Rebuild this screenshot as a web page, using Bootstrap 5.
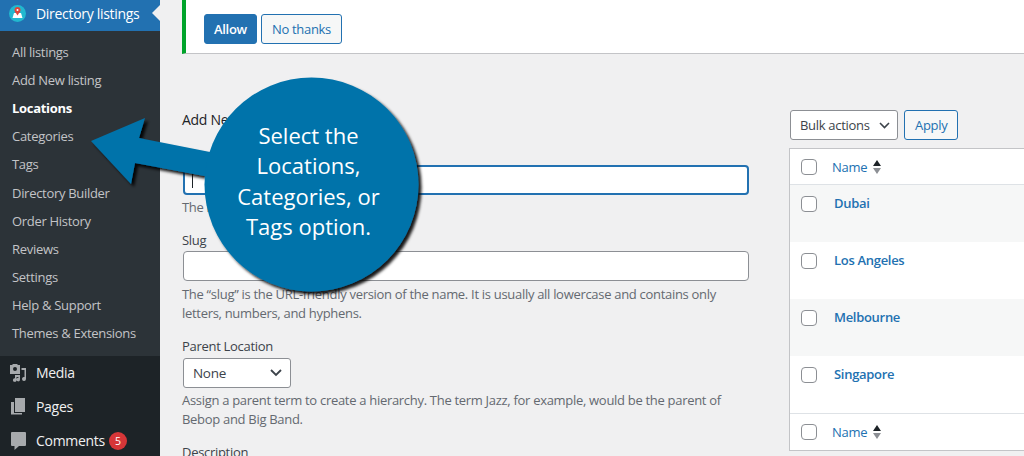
<!DOCTYPE html>
<html lang="en">
<head>
<meta charset="UTF-8">
<title>Locations – Directory listings</title>
<link href="https://cdn.jsdelivr.net/npm/bootstrap@5.3.3/dist/css/bootstrap.min.css" rel="stylesheet">
<style>
html,body{height:456px;overflow:hidden}
body{background:#f0f0f1;color:#3c434a;font-family:"Open Sans","Noto Sans",sans-serif;font-size:13px;line-height:19px;letter-spacing:-.3px}
a{color:#2271b1;text-decoration:none}
.wp-shell{height:456px;position:relative;overflow:hidden}
.wp-side{width:160px;background:#1d2327;flex:none}
.wp-current{height:31px;background:#2271b1;color:#fff;font-size:14px;position:relative;padding:0 0 4px 9px;gap:10px}
.wp-current::after{content:"";position:absolute;right:0;top:5px;border:8px solid transparent;border-right-color:#f0f0f1;border-left:0}
.wp-sub{background:#2c3338;height:325px;padding:7.05px 0 0 12px}
.wp-sub a{display:block;height:28.1px;line-height:28px;color:#c3c4c7}
.wp-sub a.on{color:#fff;font-weight:700}
.wp-top{height:34px;color:#f0f0f1;font-size:14px;padding:0 0 1px 9px;gap:10px}
.wp-top svg{flex:none}
.wp-bubble{background:#d63638;color:#fff;width:18px;height:18px;border-radius:50%;font-size:10.5px;line-height:18px;text-align:center;margin-left:-6px}
.wp-main{flex:1;min-width:0;padding-left:22px}
.wp-notice{height:54px;background:#fff;border-left:4px solid #00a32a;border-bottom:1px solid #c3c4c7;padding:14px 0 0 18px;gap:4px}
.wp-btn{height:30px;border-radius:3px;border:1px solid #2271b1;font-size:13px;line-height:28px;padding:0 10px;color:#2271b1;background:#f6f7f7}
.wp-btn.fill{background:#2271b1;color:#fff;font-weight:600;padding:0 9px}
.wp-cols{gap:39px}
.wp-form{width:568px;flex:none;padding-top:56px}
.wp-head{font-weight:500;font-size:14px;color:#1d2327;height:36px;line-height:19px}
.wp-input{height:30px;width:566px;margin-left:1px;background:#fff;border:1px solid #8c8f94;border-radius:4px}
.wp-input.focus{border:2px solid #2271b1;padding:6px 0 0 7px}
.wp-caret{display:block;width:1px;height:15px;background:#1d2327}
.wp-hint{color:#646970;margin:3px 0 0;height:19px}
.wp-label{margin-top:14px;height:19px;line-height:19px}
.wp-label.slug{height:20px}
.wp-label.name{margin-top:0}
.wp-select{width:108px;height:30px;margin:2px 0 0 1px;background:#fff;border:1px solid #8c8f94;border-radius:3px;padding:0 8px 0 9px;font-size:13.5px}
.wp-list{flex:1;min-width:0;padding-top:56px}
.wp-tools{height:38px;gap:6px;padding-left:1px}
.wp-bulk{width:108px;height:30px;background:#fff;border:1px solid #8c8f94;border-radius:3px;padding:0 7px 0 9px}
.wp-table{border:1px solid #c3c4c7;border-right:0;background:#fff;height:303px}
.wp-row{height:57px;padding:9px 0 0 11px;gap:17px;font-weight:600}
.wp-row .wp-check{margin-top:2px}
.wp-row.alt{background:#f6f7f7}
.wp-headrow{height:36px;padding-left:11px;gap:15px}
.wp-headrow a{display:flex;align-items:center;margin-top:1px}
.wp-check{width:16px;height:16px;border:1px solid #8c8f94;border-radius:4px;background:#fff;flex:none}
.wp-sort{display:inline-flex;flex-direction:column;gap:2px;margin:-1px 0 0 6px}
.wp-sort i{display:block;border:4px solid transparent;border-top:0;border-bottom:6px solid #1d2327;height:0;width:0}
.wp-sort i+i{border-bottom:0;border-top:6px solid #8c8f94}
.wp-callout{position:absolute;left:0;top:0;pointer-events:none}
.wp-say{position:absolute;left:202px;top:120px;width:213px;color:#fff;text-align:center;font-size:22px;line-height:30.3px;letter-spacing:0}
</style>
</head>
<body>
<div class="wp-shell d-flex">
  <aside class="wp-side">
    <div class="wp-current d-flex align-items-center">
      <svg width="17" height="17" viewBox="0 0 17 17"><circle cx="8.500" cy="8.500" r="8.500" fill="#22b8cf"/><path d="M3.500 13l1.500-5h7l1.500 5z" fill="#fff"/><circle cx="8.500" cy="5" r="3" fill="#e0453a"/><path d="M6 6.500l2.500 4 2.500-4z" fill="#e0453a"/><circle cx="8.500" cy="5" r="1" fill="#fff"/></svg>
      <span>Directory listings</span>
    </div>
    <nav class="wp-sub">
      <a href="#">All listings</a>
      <a href="#">Add New listing</a>
      <a href="#" class="on">Locations</a>
      <a href="#">Categories</a>
      <a href="#">Tags</a>
      <a href="#">Directory Builder</a>
      <a href="#">Order History</a>
      <a href="#">Reviews</a>
      <a href="#">Settings</a>
      <a href="#">Help &amp; Support</a>
      <a href="#">Themes &amp; Extensions</a>
    </nav>
    <div class="wp-top d-flex align-items-center">
      <svg width="17" height="18" viewBox="0 0 17 18" fill="#a7aaad"><path fill-rule="evenodd" d="M1 1h2l1-1h4l1 1h2v9H1zM6 3a2 2 0 1 0 0 4 2 2 0 0 0 0-4z"/><path d="M12.500 4H17v11a2 2 0 1 1-1.500-2V6h-3zM6 11h5v4.500a1.800 1.800 0 1 1-1.500-1.700V13H7.500v3a1.800 1.800 0 1 1-1.500-1.700z"/></svg>
      <span>Media</span>
    </div>
    <div class="wp-top d-flex align-items-center">
      <svg width="17" height="17" viewBox="0 0 17 17" fill="#a7aaad"><path d="M6 0h10v14H6z"/><path d="M2 4h3v11h8v1.500H2z"/></svg>
      <span>Pages</span>
    </div>
    <div class="wp-top d-flex align-items-center">
      <svg width="17" height="19" viewBox="0 0 17 19" fill="#a7aaad"><path d="M3 1h13a1 1 0 0 1 1 1v12a1 1 0 0 1-1 1h-6l-4.500 4v-4H3a1 1 0 0 1-1-1V2a1 1 0 0 1 1-1z"/></svg>
      <span>Comments</span>
      <span class="wp-bubble">5</span>
    </div>
  </aside>
  <main class="wp-main">
    <div class="wp-notice d-flex align-items-start">
      <a href="#" class="wp-btn fill">Allow</a>
      <a href="#" class="wp-btn">No thanks</a>
    </div>
    <div class="wp-cols d-flex">
      <section class="wp-form">
        <div class="wp-head">Add New Location</div>
        <div class="wp-label name">Name</div>
        <div class="wp-input focus"><span class="wp-caret"></span></div>
        <p class="wp-hint">The name is how it appears on your site.</p>
        <div class="wp-label slug">Slug</div>
        <div class="wp-input"></div>
        <p class="wp-hint mt-1 mb-0">The “slug” is the URL-friendly version of the name. It is usually all lowercase and contains only</p>
        <p class="wp-hint mt-0">letters, numbers, and hyphens.</p>
        <div class="wp-label">Parent Location</div>
        <div class="wp-select d-flex align-items-center justify-content-between">None
          <svg width="12" height="8" viewBox="0 0 12 8" fill="none" stroke="#3c434a" stroke-width="1.800"><path d="M1 1l5 5 5-5"/></svg>
        </div>
        <p class="wp-hint mb-0">Assign a parent term to create a hierarchy. The term Jazz, for example, would be the parent of</p>
        <p class="wp-hint mt-0">Bebop and Big Band.</p>
        <div class="wp-label">Description</div>
      </section>
      <section class="wp-list">
        <div class="wp-tools d-flex align-items-start">
          <div class="wp-bulk d-flex align-items-center justify-content-between">Bulk actions
            <svg width="11" height="7" viewBox="0 0 11 7" fill="none" stroke="#3c434a" stroke-width="1.600"><path d="M1 1l4.500 4.500L10 1"/></svg>
          </div>
          <a href="#" class="wp-btn">Apply</a>
        </div>
        <div class="wp-table">
          <div class="wp-headrow d-flex align-items-center border-bottom"><span class="wp-check"></span><a href="#">Name<span class="wp-sort"><i></i><i></i></span></a></div>
          <div class="wp-row alt d-flex"><span class="wp-check"></span><a href="#">Dubai</a></div>
          <div class="wp-row d-flex"><span class="wp-check"></span><a href="#">Los Angeles</a></div>
          <div class="wp-row alt d-flex"><span class="wp-check"></span><a href="#">Melbourne</a></div>
          <div class="wp-row d-flex"><span class="wp-check"></span><a href="#">Singapore</a></div>
          <div class="wp-headrow d-flex align-items-center border-top"><span class="wp-check"></span><a href="#">Name<span class="wp-sort"><i></i><i></i></span></a></div>
        </div>
      </section>
    </div>
  </main>
  <svg class="wp-callout" width="1024" height="456" viewBox="0 0 1024 456">
    <defs><filter id="drop" x="-20%" y="-20%" width="140%" height="140%"><feDropShadow dx="3" dy="3" stdDeviation="1.400" flood-color="#000" flood-opacity=".9"/></filter></defs>
    <g filter="url(#drop)" fill="#0073aa">
      <path d="M91 141L145 118L139 138L215 153L215 178L135 163L131 184z"/>
      <circle cx="311.500" cy="184.500" r="107"/>
    </g>
  </svg>
  <div class="wp-say">Select the<br>Locations,<br>Categories, or<br>Tags option.</div>
</div>
<script src="https://cdn.jsdelivr.net/npm/bootstrap@5.3.3/dist/js/bootstrap.bundle.min.js"></script>
</body>
</html>
